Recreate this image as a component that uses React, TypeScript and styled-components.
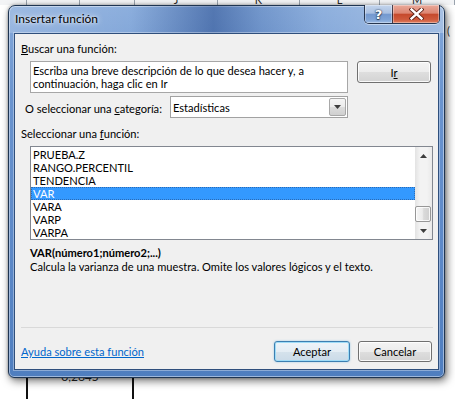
import React from "react";
import styled, { createGlobalStyle } from "styled-components";

const GlobalStyle = createGlobalStyle`
  html, body { margin: 0; padding: 0; }
  body { background: #ffffff; font-family: Lato, "Noto Sans", "DejaVu Sans", sans-serif; }
  * { box-sizing: border-box; }
`;

const Screen = styled.div`
  position: relative;
  width: 455px;
  height: 399px;
  overflow: hidden;
  background: #ffffff;
`;

/* ---------- spreadsheet behind the dialog ---------- */
const Sheet = styled.div`
  position: absolute;
  inset: 0;
  display: flex;
  flex-direction: column;
`;

const HeaderStrip = styled.div`
  height: 5px;
  display: flex;
  background: #f3f4f6;
  overflow: hidden;
`;

const HeaderCell = styled.div<{ $w: number }>`
  flex: 0 0 ${(p) => p.$w}px;
  height: 5px;
  border-right: 1px solid #9aa3ad;
  display: flex;
  align-items: flex-end;
  justify-content: center;
  overflow: hidden;
  font-size: 11px;
  line-height: 10px;
  color: #2a2a2a;
`;

const SheetBody = styled.div`
  flex: 1;
  display: flex;
  flex-direction: column;
  justify-content: flex-end;
`;

const SideMark = styled.div`
  align-self: flex-end;
  width: 8px;
  margin-bottom: 334px;
  font-size: 11px;
  line-height: 12px;
  color: #333;
`;

const CellRow = styled.div`
  height: 28px;
  display: flex;
`;

const Cell = styled.div<{ $w: number; $line?: boolean }>`
  flex: 0 0 ${(p) => p.$w}px;
  border-left: ${(p) => (p.$line ? "2px solid #111" : "none")};
  display: flex;
  justify-content: center;
  font-size: 12px;
  line-height: 12px;
  color: #222;
`;

/* ---------- window frame ---------- */
const Window = styled.div`
  position: absolute;
  left: 8px;
  top: 5px;
  width: 437px;
  height: 373px;
  border: 1px solid #1f3552;
  border-radius: 7px 7px 6px 6px;
  background: linear-gradient(180deg, #86aadb 0%, #6a94cf 25%, #5d89c8 65%, #4f7ebf 100%);
  box-shadow: inset 0 0 0 1px rgba(255, 255, 255, 0.45), 2px 3px 8px rgba(0, 0, 0, 0.55),
    0 0 3px rgba(0, 0, 0, 0.35);
  display: flex;
  flex-direction: column;
`;

const TitleBar = styled.div`
  height: 27px;
  display: flex;
  align-items: flex-start;
  padding-left: 6px;
  border-radius: 6px 6px 0 0;
  background: linear-gradient(
    90deg,
    rgba(255, 255, 255, 0.2) 0%,
    rgba(255, 255, 255, 0.05) 28%,
    rgba(15, 50, 120, 0.42) 47%,
    rgba(15, 50, 120, 0.15) 58%,
    rgba(255, 255, 255, 0.08) 72%,
    rgba(255, 255, 255, 0.28) 100%
  );
`;

const Title = styled.span`
  flex: 1;
  margin-top: 6px;
  font-size: 12px;
  line-height: 13px;
  color: #000;
  text-shadow: 0 0 6px rgba(255, 255, 255, 0.95), 0 0 3px rgba(255, 255, 255, 0.8);
`;

const CaptionButtons = styled.div`
  display: flex;
  height: 19px;
  margin-top: -1px;
  margin-right: 4px;
  border: 1px solid rgba(20, 32, 55, 0.85);
  border-top: none;
  border-radius: 0 0 5px 5px;
  overflow: hidden;
  box-shadow: 0 1px 0 rgba(255, 255, 255, 0.45);
`;

const CaptionButton = styled.div<{ $kind: "help" | "close" }>`
  width: ${(p) => (p.$kind === "close" ? 47 : 27)}px;
  display: flex;
  align-items: center;
  justify-content: center;
  background: ${(p) =>
    p.$kind === "close"
      ? "linear-gradient(180deg, #e9a99a 0%, #dd8672 45%, #c64a2d 52%, #cf5a3c 80%, #e07d5f 100%)"
      : "linear-gradient(180deg, #c3d4ec 0%, #a9c0e2 45%, #7499cf 52%, #7ea3d6 80%, #9dbbe3 100%)"};
  box-shadow: inset 0 0 0 1px rgba(255, 255, 255, 0.35);
  & + & {
    border-left: 1px solid rgba(20, 32, 55, 0.75);
  }
`;

const HelpGlyph = styled.span`
  font-family: "DejaVu Sans", sans-serif;
  font-weight: bold;
  font-size: 13px;
  line-height: 13px;
  color: #ffffff;
  text-shadow: 0 0 1px #2b3f5c, 0 0 2px #2b3f5c, 0 1px 1px #2b3f5c;
`;

/* ---------- client area ---------- */
const Client = styled.div`
  flex: 1;
  margin: 0 5px 7px 5px;
  border: 1px solid #2f4f7c;
  background: #f0f0f0;
  box-shadow: 0 0 0 1px rgba(255, 255, 255, 0.35);
  display: flex;
  flex-direction: column;
  padding: 8px 6px 7px 6px;
  font-size: 11.1px;
  line-height: 13px;
  color: #000;
`;

const Label = styled.div<{ $top?: number; $left?: number }>`
  margin-top: ${(p) => p.$top ?? 0}px;
  margin-left: ${(p) => p.$left ?? 0}px;
  white-space: nowrap;
`;

const Key = styled.span`
  text-decoration: underline;
`;

const SearchRow = styled.div`
  display: flex;
  align-items: flex-start;
  gap: 9px;
  margin-top: 6px;
  margin-left: 9px;
`;

const SearchBox = styled.div`
  width: 318px;
  height: 32px;
  border: 1px solid #a7a7a7;
  background: #ffffff;
  padding: 2px 2px;
  line-height: 13px;
  white-space: nowrap;
`;

const PushButton = styled.div<{ $w: number; $h: number; $default?: boolean }>`
  width: ${(p) => p.$w}px;
  height: ${(p) => p.$h}px;
  display: flex;
  align-items: center;
  justify-content: center;
  border: 1px solid ${(p) => (p.$default ? "#3c7fb1" : "#707070")};
  border-radius: 3px;
  background: ${(p) =>
    p.$default
      ? "linear-gradient(180deg, #eef4f9 0%, #e4edf4 50%, #d5e2ec 52%, #cbdbe8 100%)"
      : "linear-gradient(180deg, #f4f4f4 0%, #ececec 50%, #dedede 52%, #d3d3d3 100%)"};
  box-shadow: ${(p) =>
    p.$default
      ? "inset 0 0 0 1px #9fdcf7, 0 0 2px rgba(60, 160, 220, 0.5)"
      : "inset 0 0 0 1px rgba(255, 255, 255, 0.85)"};
  white-space: nowrap;
`;

const CategoryRow = styled.div`
  display: grid;
  grid-template-columns: 145px 178px;
  align-items: center;
  margin-top: 3px;
  margin-left: 4px;
`;

const CategoryLabel = styled.div`
  padding-top: 3px;
  white-space: nowrap;
`;

const Combo = styled.div`
  height: 22px;
  display: flex;
  border: 1px solid #a2a2a2;
  background: #ffffff;
`;

const ComboText = styled.div`
  flex: 1;
  padding-left: 2px;
  display: flex;
  align-items: center;
`;

const ComboButton = styled.div`
  width: 17px;
  margin: 1px;
  border: 1px solid #a8a8a8;
  border-radius: 2px;
  background: linear-gradient(180deg, #f5f5f5 0%, #ececec 50%, #dcdcdc 52%, #d0d0d0 100%);
  display: flex;
  align-items: center;
  justify-content: center;
`;

const ListBox = styled.div`
  height: 94px;
  margin: 6px -1px 0 9px;
  border: 1px solid #828790;
  background: #ffffff;
  display: flex;
`;

const ListItems = styled.div`
  flex: 1;
  display: flex;
  flex-direction: column;
  padding-top: 1px;
`;

const ListItem = styled.div<{ $selected?: boolean }>`
  height: 13px;
  padding-left: 2px;
  line-height: 13px;
  background: ${(p) => (p.$selected ? "#3399ff" : "transparent")};
  color: ${(p) => (p.$selected ? "#ffffff" : "#000000")};
  outline: ${(p) => (p.$selected ? "1px dotted rgba(40, 70, 120, 0.55)" : "none")};
  outline-offset: -1px;
`;

const ScrollBar = styled.div`
  width: 17px;
  display: flex;
  flex-direction: column;
  background: linear-gradient(90deg, #e3e3e3 0%, #f3f3f3 30%, #f3f3f3 70%, #e9e9e9 100%);
`;

const ScrollArrow = styled.div`
  height: 17px;
  display: flex;
  align-items: center;
  justify-content: center;
`;

const ScrollTrack = styled.div<{ $offset: number }>`
  flex: 1;
  display: flex;
  flex-direction: column;
  padding-top: ${(p) => p.$offset}px;
`;

const Thumb = styled.div`
  height: 16px;
  margin: 0 1px 0 0;
  border: 1px solid #979797;
  border-radius: 2px;
  background: linear-gradient(90deg, #f6f6f6 0%, #ececec 45%, #dadada 55%, #cfcfcf 100%);
  box-shadow: inset 0 0 0 1px rgba(255, 255, 255, 0.8);
`;

const Syntax = styled.div`
  margin-top: 6px;
  margin-left: 9px;
  font-weight: bold;
  white-space: nowrap;
`;

const Description = styled.div`
  margin-top: 1px;
  margin-left: 9px;
  white-space: nowrap;
`;

const Separator = styled.div`
  margin-top: auto;
  margin-right: -1px;
  height: 1px;
  background: #d9d9d9;
`;

const Footer = styled.div`
  margin-top: 13px;
  display: flex;
  align-items: center;
  gap: 8px;
`;

const HelpLink = styled.a`
  flex: 1;
  color: #0066cc;
  text-decoration: underline;
  white-space: nowrap;
`;

const Arrow = ({ up }: { up?: boolean }) => (
  <svg width="7" height="4" viewBox="0 0 7 4">
    <polygon points={up ? "0,4 7,4 3.5,0" : "0,0 7,0 3.5,4"} fill="#3d3d3d" />
  </svg>
);

const CloseIcon = () => (
  <svg width="15" height="12" viewBox="0 0 15 12">
    <path d="M2.5 1.5 L12.5 10.5 M12.5 1.5 L2.5 10.5" stroke="#5a1f14" strokeWidth="4.2" strokeLinecap="square" />
    <path d="M2.5 1.5 L12.5 10.5 M12.5 1.5 L2.5 10.5" stroke="#ffffff" strokeWidth="2.4" strokeLinecap="square" />
  </svg>
);

const functions = ["PRUEBA.Z", "RANGO.PERCENTIL", "TENDENCIA", "VAR", "VARA", "VARP", "VARPA"];

export default function App() {
  return (
    <Screen>
      <GlobalStyle />
      <Sheet>
        <HeaderStrip>
          <HeaderCell $w={27} />
          <HeaderCell $w={53} />
          <HeaderCell $w={55} />
          <HeaderCell $w={83}>J</HeaderCell>
          <HeaderCell $w={82}>K</HeaderCell>
          <HeaderCell $w={80}>L</HeaderCell>
          <HeaderCell $w={75}>M</HeaderCell>
        </HeaderStrip>
        <SheetBody>
          <SideMark>(</SideMark>
          <CellRow>
            <Cell $w={26} />
            <Cell $w={106} $line>0,2645</Cell>
            <Cell $w={100} $line />
          </CellRow>
        </SheetBody>
      </Sheet>

      <Window>
        <TitleBar>
          <Title>Insertar función</Title>
          <CaptionButtons>
            <CaptionButton $kind="help">
              <HelpGlyph>?</HelpGlyph>
            </CaptionButton>
            <CaptionButton $kind="close">
              <CloseIcon />
            </CaptionButton>
          </CaptionButtons>
        </TitleBar>

        <Client>
          <Label>
            <Key>B</Key>uscar una función:
          </Label>
          <SearchRow>
            <SearchBox>
              Escriba una breve descripción de lo que desea hacer y, a
              <br />
              continuación, haga clic en Ir
            </SearchBox>
            <PushButton $w={74} $h={22}>
              I<Key>r</Key>
            </PushButton>
          </SearchRow>
          <CategoryRow>
            <CategoryLabel>
              O seleccionar una <Key>c</Key>ategoría:
            </CategoryLabel>
            <Combo>
              <ComboText>Estadísticas</ComboText>
              <ComboButton>
                <Arrow />
              </ComboButton>
            </Combo>
          </CategoryRow>
          <Label $top={9}>
            Seleccionar una <Key>f</Key>unción:
          </Label>
          <ListBox>
            <ListItems>
              {functions.map((f) => (
                <ListItem key={f} $selected={f === "VAR"}>
                  {f}
                </ListItem>
              ))}
            </ListItems>
            <ScrollBar>
              <ScrollArrow>
                <Arrow up />
              </ScrollArrow>
              <ScrollTrack $offset={42}>
                <Thumb />
              </ScrollTrack>
              <ScrollArrow>
                <Arrow />
              </ScrollArrow>
            </ScrollBar>
          </ListBox>
          <Syntax>VAR(número1;número2;...)</Syntax>
          <Description>Calcula la varianza de una muestra. Omite los valores lógicos y el texto.</Description>
          <Separator />
          <Footer>
            <HelpLink>Ayuda sobre esta función</HelpLink>
            <PushButton $w={76} $h={21} $default>
              Aceptar
            </PushButton>
            <PushButton $w={74} $h={21}>
              Cancelar
            </PushButton>
          </Footer>
        </Client>
      </Window>
    </Screen>
  );
}
